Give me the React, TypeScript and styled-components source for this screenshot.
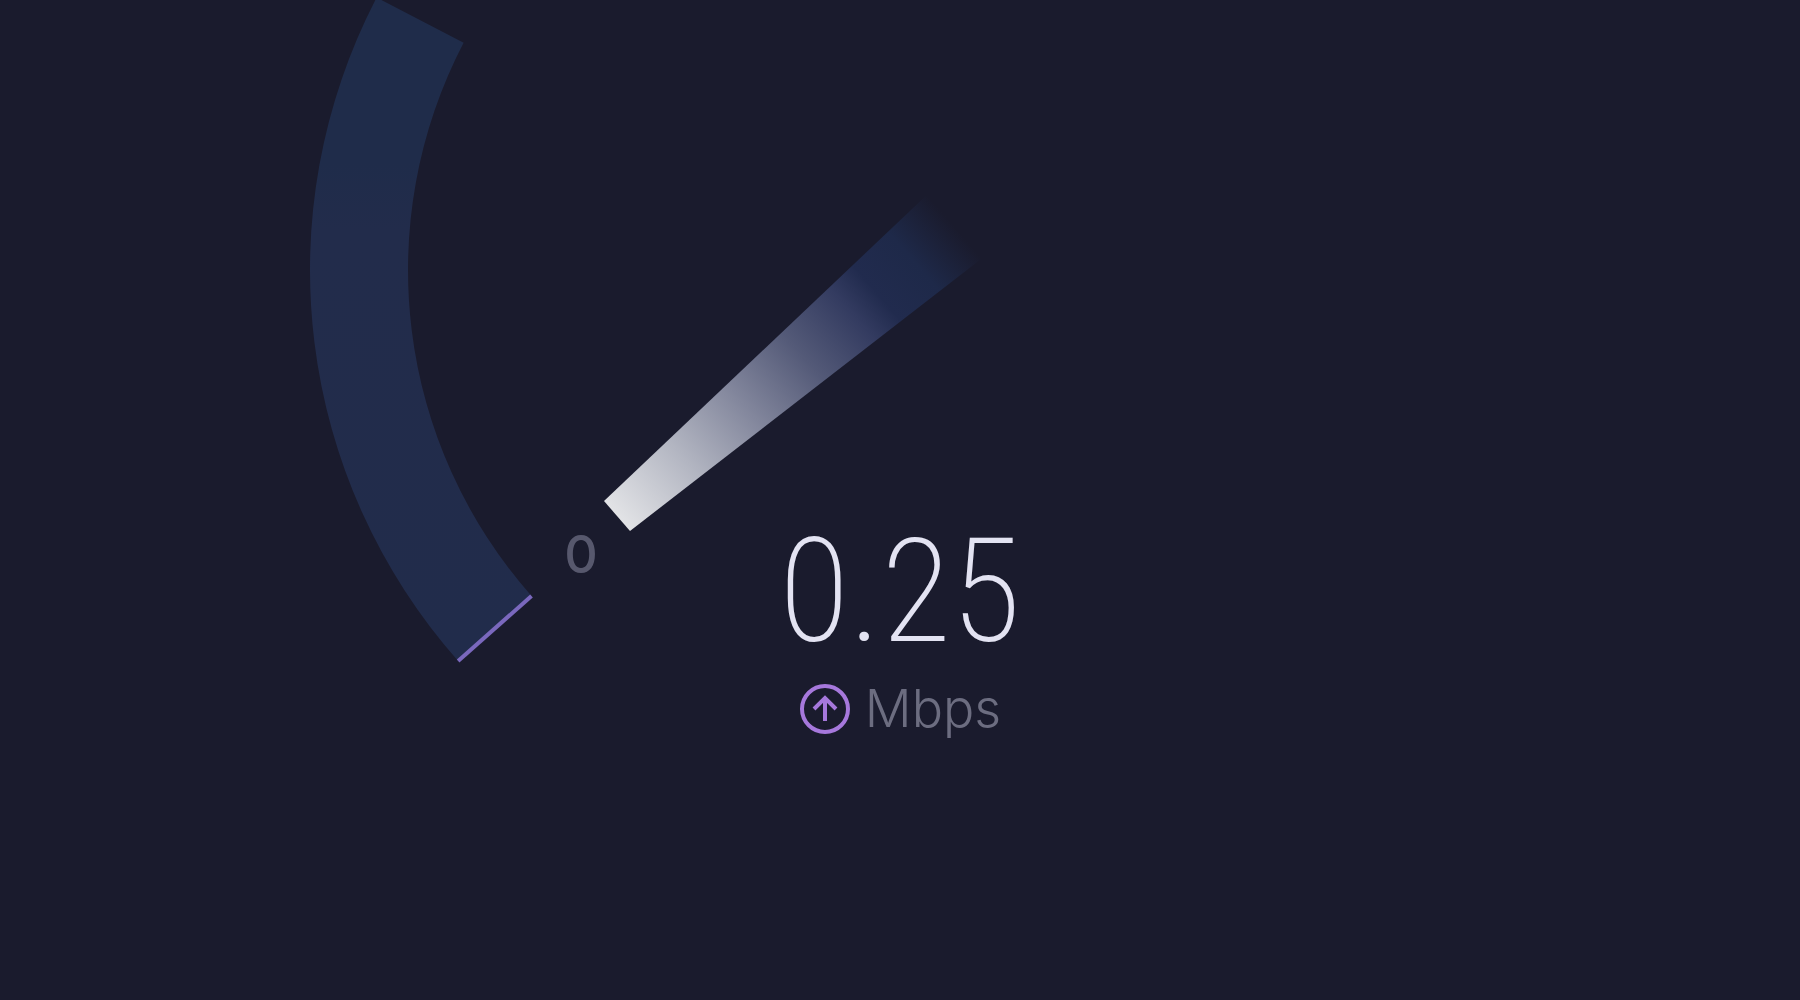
import React from "react";
import styled, { createGlobalStyle } from "styled-components";

const GlobalStyle = createGlobalStyle`
  body {
    margin: 0;
    background: #1a1b2d;
    font-family: "Inter", "Liberation Sans", sans-serif;
  }
`;

const Stage = styled.main`
  display: grid;
  justify-items: center;
  align-items: start;
  min-height: 100vh;
  overflow: hidden;
`;

const Dial = styled.svg`
  grid-area: 1 / 1;
  width: 1200px;
  height: 680px;
`;

const ScaleLabel = styled.text`
  fill: #57586d;
  font-size: 52px;
  font-weight: 500;
  text-anchor: middle;
`;

const Readout = styled.section`
  grid-area: 1 / 1;
  display: flex;
  flex-direction: column;
  align-items: center;
  gap: 16px;
  padding-top: 520px;
`;

const Value = styled.output`
  color: #e3e3f2;
  font-family: "Roboto Condensed", "Roboto", sans-serif;
  font-size: 144px;
  font-weight: 250;
  line-height: 144px;
`;

const UnitRow = styled.div`
  display: flex;
  align-items: center;
  gap: 14px;
  color: #6c6d80;
  font-size: 52px;
  font-weight: 300;
  line-height: 58px;
`;

const UploadIcon = styled.svg`
  width: 52px;
  height: 52px;
  fill: none;
  stroke: #a678dc;
  stroke-width: 4;
`;

const CX = 600;
const CY = 270;
const OUTER = 590;
const INNER = 492;

function polar(radius: number, degrees: number) {
  const a = (degrees * Math.PI) / 180;
  return `${(CX + radius * Math.cos(a)).toFixed(2)} ${(CY - radius * Math.sin(a)).toFixed(2)}`;
}

const START = 221.5;
const END = 152.5;

const track = [
  `M ${polar(OUTER, START)}`,
  `A ${OUTER} ${OUTER} 0 0 1 ${polar(OUTER, END)}`,
  `L ${polar(INNER, END)}`,
  `A ${INNER} ${INNER} 0 0 0 ${polar(INNER, START)}`,
  "Z",
].join(" ");

function Gauge({ min }: { min: number }) {
  return (
    <Dial viewBox="0 0 1200 680" role="img" aria-label="Speed gauge">
      <defs>
        <linearGradient id="track" x1="0" y1="0" x2="0" y2="1">
          <stop offset="0" stopColor="#1f2c4a" />
          <stop offset="0.25" stopColor="#1f2c4a" />
          <stop offset="0.35" stopColor="#222c4b" />
          <stop offset="1" stopColor="#212c4b" />
        </linearGradient>
        <linearGradient id="needle" gradientUnits="userSpaceOnUse" x1="317" y1="516" x2="653" y2="225">
          <stop offset="0" stopColor="#e2e3e6" />
          <stop offset="0.2" stopColor="#b2b5c1" />
          <stop offset="0.38" stopColor="#82869c" />
          <stop offset="0.55" stopColor="#545a78" />
          <stop offset="0.7" stopColor="#333b60" />
          <stop offset="0.77" stopColor="#212b4e" />
          <stop offset="0.88" stopColor="#1e2949" />
          <stop offset="1" stopColor="#1a1b2d" />
        </linearGradient>
      </defs>
      <path d={track} fill="url(#track)" />
      <path d={`M ${polar(OUTER, START)} L ${polar(INNER, START)}`} stroke="#7a68bd" strokeWidth="4" />
      <polygon points="304,501 330,531 685,256 631,191" fill="url(#needle)" />
      <ScaleLabel x="281" y="573">{min}</ScaleLabel>
    </Dial>
  );
}

export default function App() {
  return (
    <Stage>
      <GlobalStyle />
      <Gauge min={0} />
      <Readout aria-label="Upload speed">
        <Value>0.25</Value>
        <UnitRow>
          <UploadIcon viewBox="0 0 52 52" aria-hidden="true">
            <circle cx="26" cy="26" r="23" />
            <path d="M26 38V16M15 26L26 15L37 26" />
          </UploadIcon>
          <span>Mbps</span>
        </UnitRow>
      </Readout>
    </Stage>
  );
}
